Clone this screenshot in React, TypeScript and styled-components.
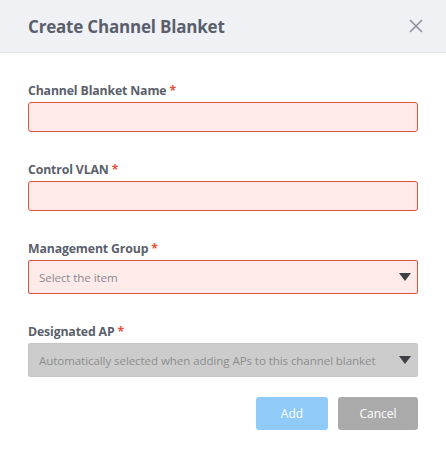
import styled, { createGlobalStyle } from 'styled-components';

const GlobalStyle = createGlobalStyle`
  html, body {
    margin: 0;
    padding: 0;
    background: #ffffff;
  }
  body {
    font-family: "Open Sans", "Noto Sans", sans-serif;
  }
`;

const Dialog = styled.div`
  width: 446px;
  height: 449px;
  background: #ffffff;
  display: flex;
  flex-direction: column;
`;

const Header = styled.div`
  height: 52px;
  background: #f0f1f5;
  border-bottom: 1px solid #e2e3e8;
  display: flex;
  align-items: center;
  justify-content: space-between;
  padding: 0 22px 0 28px;
`;

const Title = styled.h2`
  margin: 0;
  font-size: 17px;
  font-weight: 700;
  color: #5b5f6c;
  letter-spacing: -0.2px;
`;

const CloseButton = styled.button`
  background: none;
  border: none;
  padding: 0;
  width: 16px;
  height: 16px;
  display: flex;
  align-items: center;
  justify-content: center;
  cursor: pointer;
`;

const Body = styled.div`
  padding: 29px 28px 0 28px;
  display: flex;
  flex-direction: column;
`;

const Field = styled.div`
  display: flex;
  flex-direction: column;
  gap: 2px;
  margin-bottom: 29px;
`;

const Label = styled.label`
  font-size: 12.3px;
  line-height: 18px;
  font-weight: 700;
  color: #5b5f6c;
  letter-spacing: -0.15px;
`;

const Required = styled.span`
  color: #e5533d;
  margin-left: 3px;
`;

const TextInput = styled.input`
  box-sizing: border-box;
  height: 30px;
  width: 100%;
  border: 1px solid #e3503a;
  border-radius: 3px;
  background: #ffeaea;
  outline: none;
  padding: 0 10px;
  font-family: inherit;
  font-size: 12px;
`;

const Select = styled.div<{ $disabled?: boolean }>`
  box-sizing: border-box;
  height: 34px;
  width: 100%;
  border: 1px solid ${(p) => (p.$disabled ? '#c6c6c6' : '#e3503a')};
  border-radius: 2px;
  background: ${(p) => (p.$disabled ? '#cccccc' : '#ffeaea')};
  display: flex;
  align-items: center;
  justify-content: space-between;
  padding: 0 6px 0 10px;
`;

const Placeholder = styled.span<{ $disabled?: boolean }>`
  font-size: 11.6px;
  color: ${(p) => (p.$disabled ? '#8e8e8e' : '#8a8a8f')};
  letter-spacing: -0.1px;
  white-space: nowrap;
`;

const Caret = styled.span`
  width: 0;
  height: 0;
  border-left: 6px solid transparent;
  border-right: 6px solid transparent;
  border-top: 8px solid #3d3f45;
`;

const Actions = styled.div`
  display: flex;
  justify-content: flex-end;
  gap: 10px;
  margin-top: -9px;
`;

const Button = styled.button<{ $variant: 'primary' | 'neutral' }>`
  height: 33px;
  width: ${(p) => (p.$variant === 'primary' ? '72px' : '80px')};
  border: none;
  border-radius: 3px;
  background: ${(p) => (p.$variant === 'primary' ? '#90caf9' : '#aaaaaa')};
  color: #ffffff;
  font-family: inherit;
  font-size: 12px;
  cursor: pointer;
`;

export default function App() {
  return (
    <>
      <GlobalStyle />
      <Dialog>
        <Header>
          <Title>Create Channel Blanket</Title>
          <CloseButton aria-label="Close">
            <svg width="14" height="14" viewBox="0 0 14 14">
              <path d="M1 1 L13 13 M13 1 L1 13" stroke="#8a8e9c" strokeWidth="1.5" fill="none" />
            </svg>
          </CloseButton>
        </Header>
        <Body>
          <Field>
            <Label>
              Channel Blanket Name<Required>*</Required>
            </Label>
            <TextInput />
          </Field>
          <Field>
            <Label>
              Control VLAN<Required>*</Required>
            </Label>
            <TextInput />
          </Field>
          <Field>
            <Label>
              Management Group<Required>*</Required>
            </Label>
            <Select>
              <Placeholder>Select the item</Placeholder>
              <Caret />
            </Select>
          </Field>
          <Field>
            <Label>
              Designated AP<Required>*</Required>
            </Label>
            <Select $disabled>
              <Placeholder $disabled>Automatically selected when adding APs to this channel blanket</Placeholder>
              <Caret />
            </Select>
          </Field>
          <Actions>
            <Button $variant="primary">Add</Button>
            <Button $variant="neutral">Cancel</Button>
          </Actions>
        </Body>
      </Dialog>
    </>
  );
}
